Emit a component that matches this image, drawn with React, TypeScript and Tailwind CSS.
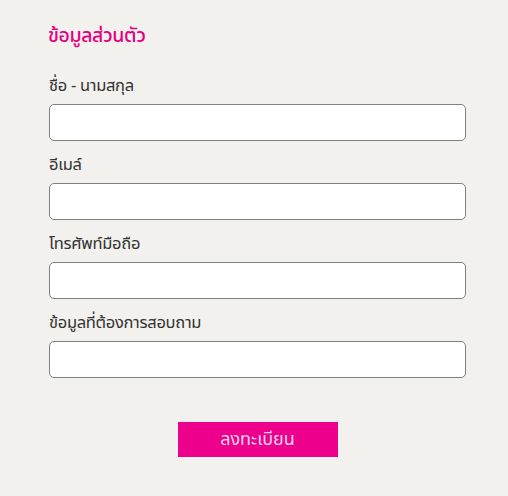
export default function App() {
  const fields = ["ชื่อ - นามสกุล", "อีเมล์", "โทรศัพท์มือถือ", "ข้อมูลที่ต้องการสอบถาม"];
  return (
    <div className="w-[508px] h-[496px] bg-[#f2f1ee] pl-[49px] pr-[42px] pt-[22px]" style={{ fontFamily: '"Noto Sans Thai", "Noto Sans", sans-serif' }}>
      <h2 className="text-[19.5px] leading-[28px] text-[#e6007e] font-medium -ml-[1px] tracking-[-0.4px]">ข้อมูลส่วนตัว</h2>
      <div className="mt-[24px] flex flex-col">
        {fields.map((f, i) => (
          <div key={i} className="h-[79px] flex flex-col">
            <label className="text-[16.5px] leading-[24px] text-[#333] tracking-[-0.3px]">{f}</label>
            <input className="mt-[6px] h-[37px] w-[417px] bg-white border border-[#808080] rounded-[5px] outline-none" />
          </div>
        ))}
      </div>
      <div className="flex justify-center w-[417px] mt-[32px]">
        <button className="w-[160px] h-[35px] bg-[#ec008c] text-[#fbd3ea] text-[18px] leading-[35px]">ลงทะเบียน</button>
      </div>
    </div>
  );
}
